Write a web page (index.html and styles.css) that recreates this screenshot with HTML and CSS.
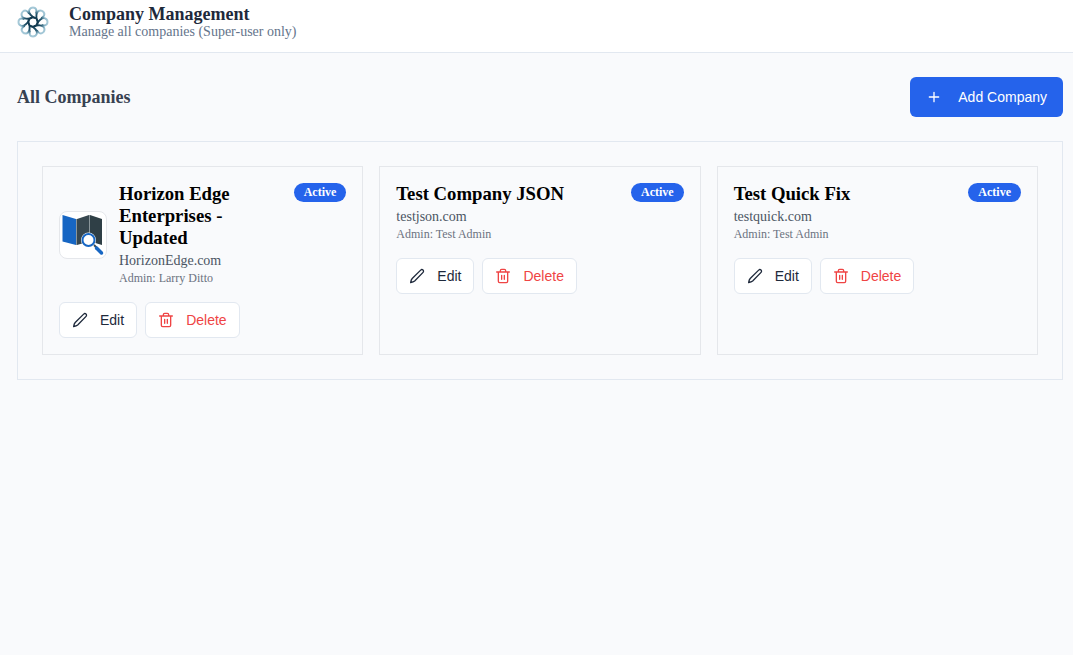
FILE: index.html
```html
<!DOCTYPE html>
<html lang="en">
<head>
<meta charset="utf-8">
<meta name="viewport" content="width=device-width, initial-scale=1">
<title>Company Management</title>
<link rel="stylesheet" href="styles.css">
</head>
<body>
<svg class="sprite" aria-hidden="true">
  <symbol id="pencil" viewBox="0 0 24 24"><path d="M17.500 3.200a2.400 2.400 0 0 1 3.600 3.400L8.500 19.500Q6.500 21.200 2.500 21.800Q3 17.800 4.800 15.800Z"/></symbol>
  <symbol id="trash" viewBox="0 0 24 24"><path d="M2.500 6h19M19 6v14c0 1-1 2-2 2H7c-1 0-2-1-2-2V6M8 6V4c0-1 1-2 2-2h4c1 0 2 1 2 2v2M10 11v6M14 11v6"/></symbol>
  <symbol id="plus" viewBox="0 0 24 24"><path d="M5 12h14M12 5v14"/></symbol>
</svg>
<header class="topbar">
  <svg class="brand" viewBox="0 0 32 32" role="img" aria-label="Logo">
    <defs>
      <radialGradient id="petal-ink" gradientUnits="userSpaceOnUse" cx="16" cy="16" r="16">
        <stop offset="0.3" stop-color="#123a50"/>
        <stop offset="0.550" stop-color="#24566e"/>
        <stop offset="0.780" stop-color="#8fb9cb"/>
        <stop offset="1" stop-color="#b4d3e0"/>
      </radialGradient>
      <path id="petal" d="M18.500 12.200C14.500 11 11 6.500 12.300 3.800C13.800 0.500 18.500 0.800 19.300 3.800C19.700 5.500 19.400 6.500 19 7.500"/>
    </defs>
    <g fill="none" stroke="url(#petal-ink)" stroke-width="1.900">
      <circle cx="16" cy="16" r="4.600"/>
      <use href="#petal"/>
      <use href="#petal" transform="rotate(45 16 16)"/>
      <use href="#petal" transform="rotate(90 16 16)"/>
      <use href="#petal" transform="rotate(135 16 16)"/>
      <use href="#petal" transform="rotate(180 16 16)"/>
      <use href="#petal" transform="rotate(225 16 16)"/>
      <use href="#petal" transform="rotate(270 16 16)"/>
      <use href="#petal" transform="rotate(315 16 16)"/>
    </g>
  </svg>
  <div>
    <h1 class="page-title">Company Management</h1>
    <p class="page-subtitle">Manage all companies (Super-user only)</p>
  </div>
</header>
<main class="content">
  <div class="toolbar">
    <h2 class="section-title">All Companies</h2>
    <button class="btn btn-primary" type="button"><svg class="icon"><use href="#plus"/></svg>Add Company</button>
  </div>
  <section class="panel">
    <article class="card">
      <div class="card-head">
        <div class="company">
          <svg class="company-logo" viewBox="0 0 46 46" role="img" aria-label="Horizon Edge Enterprises logo">
            <path d="M2.500 3l13.500 4v26L2.500 29.500z" fill="#1766c3"/>
            <path d="M17 7l12-4v26.500L17 33z" fill="#37474f"/>
            <path d="M30 3l12 4v26L30 29.500z" fill="#2f3f46"/>
            <path d="M16.500 7v26M29.500 3v26" stroke="#8a969b" stroke-width="1"/>
            <path d="M34 33l9 9" stroke="#fff" stroke-width="5"/>
            <path d="M33 32l4 4" stroke="#37474f" stroke-width="2"/>
            <path d="M36.500 36l5 5" stroke="#1766c3" stroke-width="3.500" stroke-linecap="round"/>
            <circle cx="28.500" cy="28" r="7.500" fill="#fff"/>
            <circle cx="28.500" cy="28" r="6" fill="#fff" stroke="#1766c3" stroke-width="2"/>
          </svg>
          <div>
            <h3 class="name">Horizon Edge Enterprises - Updated</h3>
            <p class="domain">HorizonEdge.com</p>
            <p class="admin">Admin: Larry Ditto</p>
          </div>
        </div>
        <span class="badge">Active</span>
      </div>
      <div class="actions">
        <button class="btn btn-outline" type="button"><svg class="icon"><use href="#pencil"/></svg>Edit</button>
        <button class="btn btn-outline btn-danger" type="button"><svg class="icon"><use href="#trash"/></svg>Delete</button>
      </div>
    </article>
    <article class="card">
      <div class="card-head">
        <div class="company">
          <div>
            <h3 class="name">Test Company JSON</h3>
            <p class="domain">testjson.com</p>
            <p class="admin">Admin: Test Admin</p>
          </div>
        </div>
        <span class="badge">Active</span>
      </div>
      <div class="actions">
        <button class="btn btn-outline" type="button"><svg class="icon"><use href="#pencil"/></svg>Edit</button>
        <button class="btn btn-outline btn-danger" type="button"><svg class="icon"><use href="#trash"/></svg>Delete</button>
      </div>
    </article>
    <article class="card">
      <div class="card-head">
        <div class="company">
          <div>
            <h3 class="name">Test Quick Fix</h3>
            <p class="domain">testquick.com</p>
            <p class="admin">Admin: Test Admin</p>
          </div>
        </div>
        <span class="badge">Active</span>
      </div>
      <div class="actions">
        <button class="btn btn-outline" type="button"><svg class="icon"><use href="#pencil"/></svg>Edit</button>
        <button class="btn btn-outline btn-danger" type="button"><svg class="icon"><use href="#trash"/></svg>Delete</button>
      </div>
    </article>
  </section>
</main>
</body>
</html>
```
FILE: styles.css
```css
* { box-sizing: border-box; }
body {
  margin: 0;
  background: #f9fafc;
  font-family: "Liberation Serif", "Times New Roman", serif;
  color: #000;
}
h1, h2, h3, p { margin: 0; }
.sprite { display: none; }

.topbar {
  display: flex;
  align-items: center;
  gap: 20px;
  padding: 4px 10px 12px 17px;
  background: #fff;
  border-bottom: 1px solid #e2e8f0;
}
.brand { width: 32px; height: 32px; flex: none; }
.page-title { font-size: 18px; line-height: 20px; color: #1e293b; }
.page-subtitle { font-size: 14px; line-height: 16px; color: #64748b; }

.content { padding: 24px 10px 24px 17px; }
.toolbar {
  display: flex;
  align-items: center;
  justify-content: space-between;
  margin-bottom: 24px;
}
.section-title { font-size: 18px; line-height: 24px; color: #374151; }

.btn {
  display: inline-flex;
  align-items: center;
  border-radius: 6px;
  font: 14px/20px "Liberation Sans", Arial, sans-serif;
  cursor: pointer;
}
.btn-primary {
  gap: 16px;
  height: 40px;
  padding: 0 16px;
  border: 0;
  background: #2563eb;
  color: #fff;
}
.btn-outline {
  gap: 12px;
  height: 36px;
  padding: 0 12px;
  border: 1px solid #e2e8f0;
  background: #fff;
  color: #1e293b;
}
.btn-danger { color: #ef4444; }
.icon {
  width: 16px;
  height: 16px;
  fill: none;
  stroke: currentColor;
  stroke-width: 2;
  stroke-linecap: round;
  stroke-linejoin: round;
}

.panel {
  display: grid;
  grid-template-columns: repeat(auto-fit, minmax(300px, 1fr));
  gap: 16px;
  padding: 24px;
  border: 1px solid #e2e8f0;
}
.card {
  padding: 16px;
  border: 1px solid #e5e7eb;
}
.card-head {
  display: flex;
  align-items: flex-start;
  justify-content: space-between;
  margin-bottom: 16px;
}
.company { display: flex; align-items: center; gap: 12px; }
.company-logo {
  width: 48px;
  height: 48px;
  flex: none;
  border: 1px solid #e5e7eb;
  border-radius: 8px;
  background: #fff;
}
.name { line-height: 22px; }
.domain { font-size: 14px; line-height: 23px; color: #4b5563; }
.admin { padding-bottom: 2px; font-size: 12px; line-height: 12px; color: #6b7280; }
.badge {
  flex: none;
  padding: 2px 10px;
  border-radius: 10px;
  background: #2563eb;
  color: #fff;
  font-size: 12px;
  font-weight: 700;
  line-height: 15px;
}
.actions { display: flex; gap: 8px; }
```
